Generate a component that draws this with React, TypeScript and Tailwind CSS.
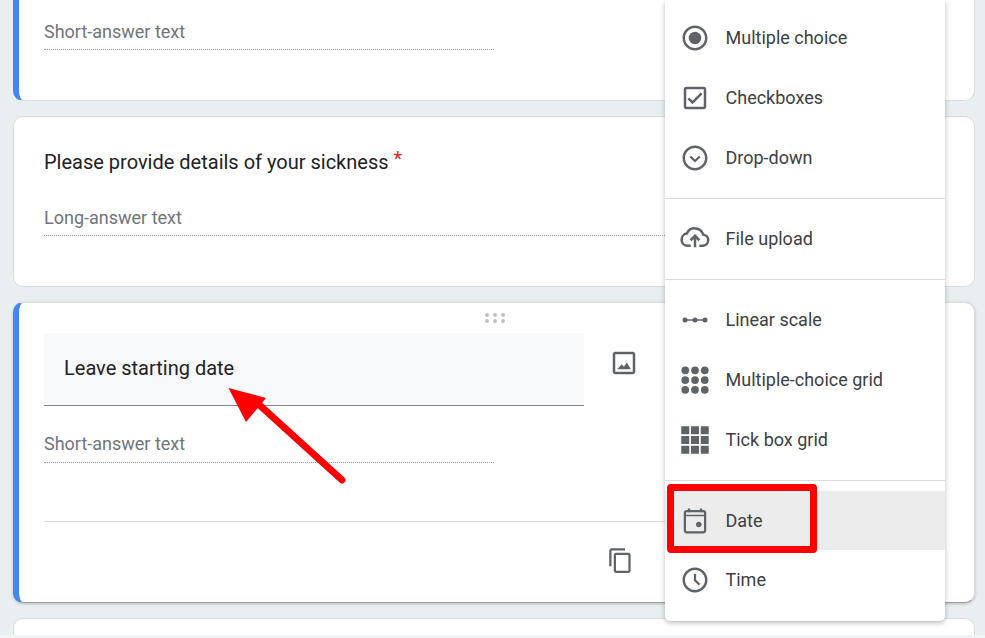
import type { ReactNode } from "react";

const font = "font-['Roboto',sans-serif]";

function Icon({ children, small }: { children: ReactNode; small?: boolean }) {
  return (
    <svg
      viewBox="0 0 24 24"
      className={`shrink-0 text-[#5f6368] ${small ? "w-[27px] h-[27px]" : "w-[30px] h-[30px]"}`}
      fill="currentColor"
    >
      {children}
    </svg>
  );
}

const ring =
  "M12 2C6.48 2 2 6.48 2 12s4.48 10 10 10 10-4.48 10-10S17.52 2 12 2zm0 18c-4.42 0-8-3.58-8-8s3.58-8 8-8 8 3.58 8 8-3.58 8-8 8z";

const RadioIcon = () => (
  <Icon>
    <path d={ring} />
    <circle cx="12" cy="12" r="5" />
  </Icon>
);

const CheckIcon = () => (
  <Icon>
    <path d="M19 3H5c-1.1 0-2 .9-2 2v14c0 1.1.9 2 2 2h14c1.1 0 2-.9 2-2V5c0-1.1-.9-2-2-2zm0 16H5V5h14v14z" />
    <path d="M17.99 9l-1.41-1.42-6.59 6.59-2.58-2.57-1.42 1.41 4 3.99z" />
  </Icon>
);

const DropIcon = () => (
  <Icon>
    <path d={ring} />
    <path d="M8.2 10.8 12 14.4l3.8-3.6" fill="none" stroke="currentColor" strokeWidth="1.8" />
  </Icon>
);

const UploadIcon = () => (
  <Icon>
    <path
      d="M8.5 17.4H6a4.9 4.9 0 0 1-.5-9.75A7 7 0 0 1 18.6 8.5a4.5 4.5 0 0 1 .2 8.9h-3.3"
      fill="none"
      stroke="currentColor"
      strokeWidth="2"
    />
    <path d="M12 18.5V10M8.5 13 12 9.5l3.5 3.5" fill="none" stroke="currentColor" strokeWidth="2" />
  </Icon>
);

const ScaleIcon = () => (
  <Icon>
    <path d="M3 12h18" stroke="currentColor" strokeWidth="1.2" />
    <circle cx="4" cy="12" r="2" />
    <circle cx="12" cy="12" r="2" />
    <circle cx="20" cy="12" r="2" />
  </Icon>
);

const cells = [4.2, 12, 19.8];

const DotGridIcon = () => (
  <Icon>
    {cells.flatMap((y) => cells.map((x) => <circle key={`${x}-${y}`} cx={x} cy={y} r="3.1" />))}
  </Icon>
);

const TickGridIcon = () => (
  <Icon>
    {cells.flatMap((y) =>
      cells.map((x) => <rect key={`${x}-${y}`} x={x - 3.2} y={y - 3.2} width="6.4" height="6.4" />),
    )}
  </Icon>
);

const DateIcon = () => (
  <Icon>
    <rect x="3.9" y="4" width="16.2" height="17" rx="1.6" fill="none" stroke="currentColor" strokeWidth="1.8" />
    <path d="M3.9 7.6h16.2" stroke="currentColor" strokeWidth="1.2" />
    <path d="M7.2 2v3M16.8 2v3" stroke="currentColor" strokeWidth="1.8" />
    <circle cx="15" cy="14.8" r="2.2" />
  </Icon>
);

const TimeIcon = () => (
  <Icon>
    <path d={ring} />
    <path d="M12 7v5.2l3.6 3.6" fill="none" stroke="currentColor" strokeWidth="1.8" />
  </Icon>
);

function MenuRow({ icon, label, active }: { icon: ReactNode; label: string; active?: boolean }) {
  return (
    <div className={`flex items-center pl-[15px] gap-[15.5px] ${active ? "h-[59px] bg-[#ececec]" : "h-[60px]"}`}>
      {icon}
      <span className={`text-[18px] text-[#3c4043] ${active ? "" : "pb-[2px]"}`}>{label}</span>
    </div>
  );
}

function AnswerLine({ label, className }: { label: string; className: string }) {
  return (
    <div className={`border-b border-dotted border-[#9aa0a6] text-[18px] text-[#70757a] leading-[26px] ${className}`}>
      {label}
    </div>
  );
}

export default function App() {
  return (
    <div className={`relative h-[638px] overflow-hidden bg-[#e9eef1] pl-[13px] pr-[10px] ${font}`}>
      <div className="flex flex-col gap-[15px]">
        <div className="h-[101px] bg-white border-b border-[#dadce0] border-l-[6px] border-l-[#4285f4] rounded-b-[10px] pl-[25px] pt-[19px] border-r">
          <AnswerLine label="Short-answer text" className="w-[450px] pb-[4px]" />
        </div>

        <div className="h-[171px] bg-white border border-[#dadce0] rounded-[10px] pl-[30px] pr-[31px] pt-[31px]">
          <div className="text-[20px] leading-[28px] text-[#202124]">
            Please provide details of your sickness{" "}
            <span className="text-[#d93025] leading-none align-[3px]">*</span>
          </div>
          <AnswerLine label="Long-answer text" className="mt-[29px] pb-[4px]" />
        </div>

        <div className="h-[301px] bg-white border border-[#dadce0] border-l-[6px] border-l-[#4285f4] border-b-[#9aa0a6] rounded-[10px] shadow-[0_1px_3px_rgba(60,64,67,0.3)] pl-[25px] pr-[31px]">
          <div className="flex justify-center pt-[10px] h-[30px]">
            <svg viewBox="0 0 20 10" className="ml-[2px] w-[20px] h-[10px] text-[#bdc1c6]" fill="currentColor">
              {[2, 10, 18].flatMap((x) =>
                [2, 8].map((y) => <circle key={`${x}-${y}`} cx={x} cy={y} r="2" />),
              )}
            </svg>
          </div>
          <div className="flex items-center">
            <div className="w-[540px] h-[73px] bg-[#f8f9fa] border-b border-[#80868b] pl-5 pb-[2px] flex items-center text-[20px] text-[#202124]">
              Leave starting date
            </div>
            <div className="ml-[25px] -mt-[14px]">
              <Icon>
                <path d="M19 3H5c-1.1 0-2 .9-2 2v14c0 1.1.9 2 2 2h14c1.1 0 2-.9 2-2V5c0-1.1-.9-2-2-2zm0 16H5V5h14v14z" />
                <path d="M6.5 17h11l-3.2-5.5-2.4 3.5-1.7-2z" />
              </Icon>
            </div>
          </div>
          <AnswerLine label="Short-answer text" className="w-[450px] mt-[25px] pb-[5px]" />
          <div className="mt-[58px] border-t border-[#dadce0] h-[80px] flex pl-[563px] pt-[25px]">
            <Icon small>
              <path d="M16 1H4c-1.1 0-2 .9-2 2v14h2V3h12V1zm3 4H8c-1.1 0-2 .9-2 2v14c0 1.1.9 2 2 2h11c1.1 0 2-.9 2-2V7c0-1.1-.9-2-2-2zm0 16H8V7h11v14z" />
            </Icon>
          </div>
        </div>

        <div className="h-[30px] bg-white border border-[#dadce0] rounded-t-[10px]" />
      </div>

      <div className="absolute left-0 right-0 top-[635px] h-[3px] bg-[#f1f3f4]" />

      {/* type picker menu */}
      <div className="absolute left-[665px] top-0 w-[280px] bg-white rounded-b-[5px] shadow-[0_2px_5px_rgba(60,64,67,0.35)]">
        <div className="pt-2 pb-[10px] border-b border-[#dadce0]">
          <MenuRow icon={<RadioIcon />} label="Multiple choice" />
          <MenuRow icon={<CheckIcon />} label="Checkboxes" />
          <MenuRow icon={<DropIcon />} label="Drop-down" />
        </div>
        <div className="py-[10px] border-b border-[#dadce0]">
          <MenuRow icon={<UploadIcon />} label="File upload" />
        </div>
        <div className="py-[10px] border-b border-[#dadce0]">
          <MenuRow icon={<ScaleIcon />} label="Linear scale" />
          <MenuRow icon={<DotGridIcon />} label="Multiple-choice grid" />
          <MenuRow icon={<TickGridIcon />} label="Tick box grid" />
        </div>
        <div className="pt-[10px] pb-[11px]">
          <MenuRow icon={<DateIcon />} label="Date" active />
          <MenuRow icon={<TimeIcon />} label="Time" />
        </div>
      </div>

      {/* annotations */}
      <div className="absolute left-[667px] top-[484px] w-[150px] h-[69px] border-[7px] border-[#ff0000] rounded-[4px]" />
      <svg className="absolute left-[220px] top-[380px] w-[135px] h-[110px]" viewBox="220 380 135 110">
        <path d="M254 400 342 480" stroke="#ff0000" strokeWidth="7" strokeLinecap="round" />
        <path d="M228.5 388 266 398 246 422z" fill="#ff0000" />
      </svg>
    </div>
  );
}
